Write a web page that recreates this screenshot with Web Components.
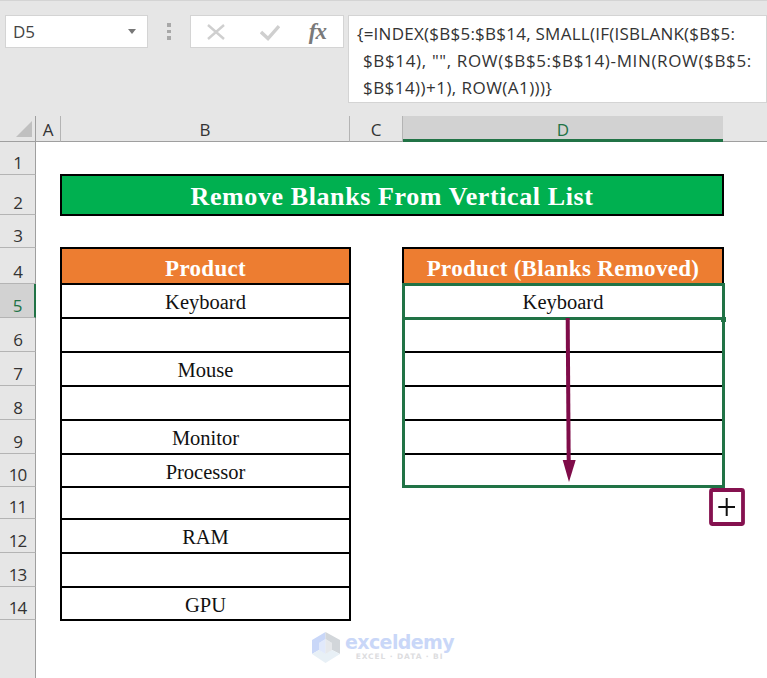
<!DOCTYPE html>
<html lang="en"><head><meta charset="utf-8"><title>Remove Blanks</title>
<style>html,body{margin:0;padding:0;background:#fff}body{width:767px;height:678px;overflow:hidden}</style></head>
<body>
<excel-app>
  <formula-bar slot="top" ref="D5">
    <span style="letter-spacing:.25px">{=INDEX($B$5:$B$14, SMALL(IF(ISBLANK($B$5:</span>
    <span class="i" style="letter-spacing:.65px">$B$14), "", ROW($B$5:$B$14)-MIN(ROW($B$5:</span>
    <span class="i" style="letter-spacing:.45px">$B$14))+1), ROW(A1)))}</span>
  </formula-bar>
  <excel-sheet id="sheet"></excel-sheet>
</excel-app>
<script>
const def=(n,html,extra={})=>{customElements.define(n,class extends HTMLElement{
  constructor(){super();const t=document.createElement('template');t.innerHTML=html;this.attachShadow({mode:'open'}).appendChild(t.content.cloneNode(true));}
  connectedCallback(){extra.init&&extra.init.call(this)}
})};

def('excel-app',`<style>:host{display:flex;flex-direction:column;width:767px;height:678px;background:#fff;overflow:hidden;position:relative}</style><slot name="top"></slot><slot></slot>`);

def('formula-bar',`<style>
:host{display:flex;align-items:flex-start;height:116px;box-sizing:border-box;padding:15px 0 0 5px;background:#e6e6e6;border-top:1px solid #d4d4d4;font:17px/27px "Open Sans",sans-serif;color:#333}
.box{background:#fff;border:1px solid #d4d4d4;box-sizing:border-box;height:33px;display:flex;align-items:center;margin-top:-1px}
.name{width:143px;padding:0 11px 0 7px;justify-content:space-between;color:#444}
.name i{width:0;height:0;border:4.5px solid transparent;border-top:5px solid #777;border-bottom:0}
.dots{width:42px;display:flex;flex-direction:column;align-items:center;gap:3px;margin-top:7px}
.dots b{width:4px;height:3.5px;background:#a8a8a8}
.fx{width:154px;padding:0 15px 0 15px;justify-content:space-between}
.fn{font:italic bold 23px "Liberation Serif",serif;color:#7a7a7a;letter-spacing:-1px;padding-right:2px;line-height:28px}
.f{margin-left:4px;flex:1;height:88px;align-items:flex-start;flex-direction:column;padding:4px 0 0 8px;white-space:nowrap}
::slotted(span){display:block}
::slotted(.i){padding-left:6px}
</style>
<div class="box name"><span id="r"></span><i></i></div>
<div class="dots"><b></b><b></b><b></b></div>
<div class="box fx">
<svg width="20" height="18" viewBox="0 0 20 18"><path d="M2 2 18 16M18 2 2 16" stroke="#cfcfcf" stroke-width="2.4" fill="none"/></svg>
<svg width="20" height="18" viewBox="0 0 20 18" style="margin-left:6px"><path d="M1 9 8 15.500 19 3" stroke="#cfcfcf" stroke-width="3.4" fill="none"/></svg>
<span class="fn">fx</span></div>
<div class="box f"><slot></slot></div>`,{init(){this.shadowRoot.getElementById('r').textContent=this.getAttribute('ref')}});

def('sheet-cell',`<style>
:host{display:flex;align-items:center;justify-content:center;box-sizing:border-box;min-width:0;font:20.5px/1 "Liberation Serif",serif;color:#111;white-space:nowrap}
:host([kind=col]){font:17px "Open Sans",sans-serif;color:#333;background:#e6e6e6;border-right:1px solid #b4b4b4;border-bottom:1px solid #9f9f9f;padding-top:1px}
:host([kind=col][sel]){background:#d2d2d2;color:#217346;border-bottom:3px solid #217346;border-right:0;padding-top:3px}
:host([kind=rowh]){font:17px/20px "Open Sans",sans-serif;letter-spacing:-1px;color:#333;background:#e6e6e6;border-right:1px solid #9f9f9f;border-bottom:1px solid #b4b4b4;align-items:flex-end;padding-bottom:1px}
:host([kind=rowh][sel]){background:#d2d2d2;color:#217346;border-right:2px solid #217346}
:host([kind=data]){border:2px solid #000;margin:-1px;background:#fff;padding-top:3px}
:host([kind=head]){border:2px solid #000;margin:-1px;background:#ed7d31;color:#fff;font-weight:700;font-size:23px;letter-spacing:.3px;padding-top:4px}
:host([kind=title]){border:2px solid #000;margin:-1px;background:#00b050;color:#fff;font-weight:700;font-size:26px;letter-spacing:.6px;padding-top:4px}
</style><slot></slot>`);

def('selection-range',`<style>
:host{position:absolute;left:402px;top:167px;width:323px;height:205px;box-sizing:border-box;border:3px solid #217346;pointer-events:none}
.a{position:absolute;left:0;right:0;top:31px;height:3px;background:#217346}
.h{position:absolute;right:-4px;top:31px;width:5px;height:5px;background:#217346}
</style><div class="a"></div><div class="h"></div>`);

def('fill-arrow',`<style>:host{position:absolute;left:556px;top:202px;width:24px;height:166px}svg{display:block}</style>
<svg width="24" height="166" viewBox="0 0 24 166"><path d="M11.700 0 12.700 146" stroke="#7f0c49" stroke-width="4" fill="none"/><path d="M6.700 142H19.700L13 164Z" fill="#7f0c49"/></svg>`);

def('fill-handle',`<style>:host{position:absolute;left:709px;top:372px;width:36px;height:38px}svg{display:block}</style>
<svg width="36" height="38" viewBox="0 0 36 38"><rect x="2" y="2" width="32" height="34" rx="1.500" fill="#fff" stroke="#85114f" stroke-width="3.800"/><path d="M17.700 10V28M9.300 19H26" stroke="#111" stroke-width="2" fill="none"/></svg>`);

def('brand-mark',`<style>
:host{position:absolute;left:312px;top:516px;width:150px;height:46px;display:flex;gap:5px}
.t{display:flex;flex-direction:column;align-items:center;padding-top:1px}
.n{font:700 19px/19px "DejaVu Sans",sans-serif;color:#c9d7f8;letter-spacing:-.6px}
.s{font:700 7.500px/9px "DejaVu Sans",sans-serif;color:#dddddf;letter-spacing:.9px}
svg{flex:none}
</style>
<svg width="28" height="31" viewBox="0 0 28 31"><path d="M13.500 0 0 8V22L7 18V11L13.500 7Z" fill="#c9d7f8"/><path d="M13.500 0 28 8V22L20 18V11L13.500 7Z" fill="#d2d6da"/><path d="M0 22 13.500 31 28 22 20 18 13.500 22 7 18Z" fill="#e8f0f6"/><path d="M13.500 7 7 11V18L13.500 22V14Z" fill="#c9d7f8" opacity=".55"/><path d="M13.500 7 20 11V18L13.500 22V14Z" fill="#d2d6da" opacity=".55"/></svg>
<div class="t"><span class="n">exceldemy</span><span class="s">EXCEL · DATA · BI</span></div>`);

def('excel-sheet',`<style>
:host{display:block;position:relative;height:562px;background:#fff}
.g{display:grid;grid-template-columns:36px 25px 289px 53px 320px 44px;grid-template-rows:26px 33px 40px 33px 36px 34px 34px 34px 34px 34px 33px 32px 34px 34px 33px 1fr;height:100%}
.c{grid-column:6;grid-row:1;background:#e6e6e6;border-bottom:1px solid #9f9f9f}
.f{grid-column:1;grid-row:16;background:#e6e6e6;border-right:1px solid #9f9f9f}
.corner{background:#e6e6e6;border-right:1px solid #9f9f9f;border-bottom:1px solid #9f9f9f;box-sizing:border-box;position:relative;grid-column:1;grid-row:1}
.corner i{position:absolute;right:3px;bottom:4px;width:0;height:0;border-left:16px solid transparent;border-bottom:16px solid #c0c0c0}
</style>
<div class="g" id="g"><div class="corner"><i></i></div><div class="c"></div><div class="f"></div><slot></slot></div>
<selection-range></selection-range><fill-arrow></fill-arrow><fill-handle></fill-handle><brand-mark></brand-mark>`,{init(){
  if(this.done)return;this.done=1;
  const add=(kind,c,r,t,cs,sel)=>{const e=document.createElement('sheet-cell');e.setAttribute('kind',kind);e.style.gridColumn=cs?`${c} / span ${cs}`:c;e.style.gridRow=r;if(sel)e.setAttribute('sel','');if(t)e.textContent=t;this.appendChild(e)};
  ['A','B','C','D'].forEach((t,i)=>add('col',i+2,1,t,0,t==='D'));
  for(let i=1;i<=14;i++)add('rowh',1,i+1,String(i),0,i===5);
  add('title',3,3,'Remove Blanks From Vertical List',3);
  add('head',3,5,'Product');add('head',5,5,'Product (Blanks Removed)');
  ['Keyboard','','Mouse','','Monitor','Processor','','RAM','','GPU'].forEach((t,i)=>add('data',3,6+i,t));
  ['Keyboard','','','','',''].forEach((t,i)=>add('data',5,6+i,t));
}});
</script>
</body></html>
